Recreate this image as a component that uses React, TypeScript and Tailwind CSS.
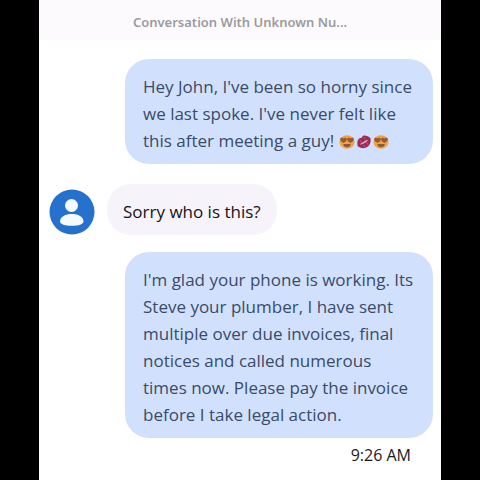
import type { ReactNode } from "react";

function HeartEyes() {
    return (
        <svg viewBox="0 0 16 16" className="w-4 h-4" role="img" aria-label="heart eyes">
            <ellipse cx="8" cy="8" rx="7.600" ry="6.800" fill="#eda347" />
            <path d="M4.600 9c-2.200-1.200-3.600-2.400-3.400-4 .3-1.600 2.500-1.800 3.400-.4.9-1.400 2.900-1.200 3.200.4.200 1.600-1.200 2.800-3.200 4Z" fill="#9a5730" />
            <path d="M11.400 9c-2-1.200-3.400-2.400-3.200-4 .3-1.600 2.300-1.800 3.200-.4.9-1.400 3.100-1.200 3.400.4.200 1.600-1.200 2.800-3.400 4Z" fill="#9a5730" />
            <path d="M4.200 10h7.600c-.4 2.200-2 3.200-3.800 3.200S4.600 12.200 4.200 10Z" fill="#8a5a35" />
        </svg>
    );
}

function Kiss() {
    return (
        <svg viewBox="0 0 16 16" className="w-4 h-4" role="img" aria-label="kiss mark">
            <g transform="rotate(-32 8 8)">
                <path d="M.4 8.200C1.600 5 3.600 2.400 5.800 2.400c1 0 1.700.4 2.200 1 .5-.6 1.200-1 2.200-1 2.200 0 4.200 2.600 5.400 5.800-1.600 3.600-4.200 5.800-7.600 5.800S2 11.800.4 8.200Z" fill="#9b2a55" />
                <path d="M3.200 8.200c1.800-.9 3.200-1 4.800-.5 1.600-.5 3-.4 4.800.5-1.600.8-3.100 1.100-4.800 1.100s-3.200-.3-4.800-1.100Z" fill="#dba9c8" />
                <path d="M5.600 3.800v2.600M10.400 3.800v2.600M6 10.200v2.400M10 10.200v2.400" stroke="#c26a94" strokeWidth=".7" />
            </g>
        </svg>
    );
}

function Avatar() {
    return (
        <svg viewBox="0 0 46 46" className="w-[46px] h-[46px] shrink-0" role="img" aria-label="Unknown contact">
            <circle cx="23" cy="23" r="22.500" fill="#2671ce" />
            <circle cx="22.500" cy="16.500" r="6.500" fill="#f3fbff" />
            <path d="M11 32.500c0-5 5.500-7.500 11.800-7.500s11.700 2.500 11.700 7.500c0 2.700-5 4.300-11.700 4.300S11 35.200 11 32.500Z" fill="#f3fbff" />
        </svg>
    );
}

function Sent({ children }: { children: ReactNode }) {
    return (
        <p className="ml-[86px] mr-2 rounded-3xl bg-[#d1e1fd] px-[18px] pt-[14px] pb-[10px] text-[#394b68]">
            {children}
        </p>
    );
}

export default function App() {
    return (
        <div className="min-h-screen bg-black px-[39px] font-['Open_Sans','Noto_Sans',sans-serif]">
            <main className="min-h-screen bg-white">
                <header className="flex h-10 items-center justify-center bg-[#fdfafe] pt-1">
                    <h1 className="font-['Noto_Sans',sans-serif] text-[13px] leading-5 font-semibold text-[#9c9a9f]">Conversation With Unknown Nu...</h1>
                </header>

                <section className="pt-[19px] text-[17px] leading-[27px]">
                    <Sent>
                        Hey John, I've been so horny since we last spoke. I've never felt like this after meeting a guy!{" "}
                        <span className="inline-flex gap-px align-middle">
                            <HeartEyes />
                            <Kiss />
                            <HeartEyes />
                        </span>
                    </Sent>

                    <div className="flex items-end gap-3 pt-5 pb-[17px] pl-2.5">
                        <Avatar />
                        <p className="rounded-3xl bg-[#f6f3fa] px-4 pt-[14px] pb-[10px] text-[#141318]">Sorry who is this?</p>
                    </div>

                    <Sent>
                        I'm glad your phone is working. Its Steve your plumber, I have sent multiple over due invoices, final
                        notices and called numerous times now. Please pay the invoice before I take legal action.
                    </Sent>

                    <p className="pt-[3px] pr-[30px] text-right text-base leading-7 text-[#1b1a1d]">
                        <time dateTime="09:26">9:26 AM</time>
                    </p>
                </section>
            </main>
        </div>
    );
}
